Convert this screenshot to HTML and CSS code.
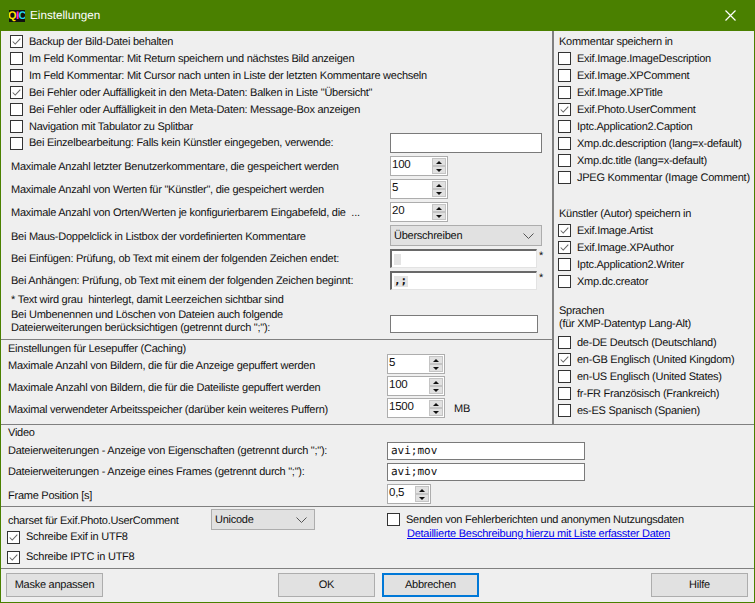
FILE: index.html
```html
<!DOCTYPE html>
<html lang="de">
<head>
  <meta charset="UTF-8">
  <title>Einstellungen</title>
  <link rel="stylesheet" href="styles.css">
</head>
<body>
  <div class="window">
    <div class="titlebar">
      <span class="app-icon"><b class="q">Q</b><b class="i">I</b><b class="c">C</b></span>
      <span class="title">Einstellungen</span>
      <svg class="close" width="11" height="11" viewBox="0 0 11 11"><path d="M0.5 0.5L10.5 10.5M10.5 0.5L0.5 10.5" stroke="#fff" stroke-width="1.2" fill="none"/></svg>
    </div>

    <div class="top">
      <div class="left">
        <div class="general">
          <label class="check-row"><span class="box"><svg viewBox="0 0 13 13"><path d="M2 6.5L5 9.5L11 3" stroke="#666" stroke-width="1.2" fill="none"/></svg></span>Backup der Bild-Datei behalten</label>
          <label class="check-row"><span class="box"></span>Im Feld Kommentar: Mit Return speichern und nächstes Bild anzeigen</label>
          <label class="check-row"><span class="box"></span>Im Feld Kommentar: Mit Cursor nach unten in Liste der letzten Kommentare wechseln</label>
          <label class="check-row"><span class="box"><svg viewBox="0 0 13 13"><path d="M2 6.5L5 9.5L11 3" stroke="#666" stroke-width="1.2" fill="none"/></svg></span>Bei Fehler oder Auffälligkeit in den Meta-Daten: Balken in Liste "Übersicht"</label>
          <label class="check-row"><span class="box"></span>Bei Fehler oder Auffälligkeit in den Meta-Daten: Message-Box anzeigen</label>
          <label class="check-row"><span class="box"></span>Navigation mit Tabulator zu Splitbar</label>
          <div class="check-row with-field">
            <label class="check-label"><span class="box"></span>Bei Einzelbearbeitung: Falls kein Künstler eingegeben, verwende:</label>
            <div class="field artist-field"></div>
          </div>

          <div class="form-row tall">
            <span class="form-label">Maximale Anzahl letzter Benutzerkommentare, die gespeichert werden</span>
            <div class="spinner"><span class="spin-value">100</span><span class="spin-btns"><i class="up"></i><i class="down"></i></span></div>
          </div>
          <div class="form-row tall">
            <span class="form-label">Maximale Anzahl von Werten für "Künstler", die gespeichert werden</span>
            <div class="spinner"><span class="spin-value">5</span><span class="spin-btns"><i class="up"></i><i class="down"></i></span></div>
          </div>
          <div class="form-row tall">
            <span class="form-label">Maximale Anzahl von Orten/Werten je konfigurierbarem Eingabefeld, die &nbsp;...</span>
            <div class="spinner"><span class="spin-value">20</span><span class="spin-btns"><i class="up"></i><i class="down"></i></span></div>
          </div>
          <div class="form-row tall select-row">
            <span class="form-label">Bei Maus-Doppelclick in Listbox der vordefinierten Kommentare</span>
            <div class="select wide"><span>Überschreiben</span><svg width="11" height="6" viewBox="0 0 11 6"><path d="M0.5 0.5L5.5 5.5L10.5 0.5" stroke="#555" fill="none"/></svg></div>
          </div>
          <div class="form-row sunken-row">
            <span class="form-label">Bei Einfügen: Prüfung, ob Text mit einem der folgenden Zeichen endet:</span>
            <div class="sunken"><span class="marked blank"></span></div><span class="star">*</span>
          </div>
          <div class="form-row sunken-row">
            <span class="form-label">Bei Anhängen: Prüfung, ob Text mit einem der folgenden Zeichen beginnt:</span>
            <div class="sunken"><span class="marked">,;</span></div><span class="star">*</span>
          </div>
          <div class="note">* Text wird grau &nbsp;hinterlegt, damit Leerzeichen sichtbar sind</div>
          <div class="form-row ext-row">
            <span class="form-label">Bei Umbenennen und Löschen von Dateien auch folgende<br>Dateierweiterungen berücksichtigen (getrennt durch ";"):</span>
            <div class="field ext"></div>
          </div>
        </div>

        <div class="caching">
          <div class="heading">Einstellungen für Lesepuffer (Caching)</div>
          <div class="form-row cache-row">
            <span class="form-label">Maximale Anzahl von Bildern, die für die Anzeige gepuffert werden</span>
            <div class="spinner"><span class="spin-value">5</span><span class="spin-btns"><i class="up"></i><i class="down"></i></span></div>
          </div>
          <div class="form-row cache-row">
            <span class="form-label">Maximale Anzahl von Bildern, die für die Dateiliste gepuffert werden</span>
            <div class="spinner"><span class="spin-value">100</span><span class="spin-btns"><i class="up"></i><i class="down"></i></span></div>
          </div>
          <div class="form-row cache-row">
            <span class="form-label">Maximal verwendeter Arbeitsspeicher (darüber kein weiteres Puffern)</span>
            <div class="spinner"><span class="spin-value">1500</span><span class="spin-btns"><i class="up"></i><i class="down"></i></span></div>
            <span class="unit">MB</span>
          </div>
        </div>
      </div>

      <div class="right">
        <div class="group comment-group">
          <div class="heading">Kommentar speichern in</div>
          <label class="check-row"><span class="box"></span>Exif.Image.ImageDescription</label>
          <label class="check-row"><span class="box"></span>Exif.Image.XPComment</label>
          <label class="check-row"><span class="box"></span>Exif.Image.XPTitle</label>
          <label class="check-row"><span class="box"><svg viewBox="0 0 13 13"><path d="M2 6.5L5 9.5L11 3" stroke="#666" stroke-width="1.2" fill="none"/></svg></span>Exif.Photo.UserComment</label>
          <label class="check-row"><span class="box"></span>Iptc.Application2.Caption</label>
          <label class="check-row"><span class="box"></span>Xmp.dc.description (lang=x-default)</label>
          <label class="check-row"><span class="box"></span>Xmp.dc.title (lang=x-default)</label>
          <label class="check-row"><span class="box"></span>JPEG Kommentar (Image Comment)</label>
        </div>
        <div class="group artist-group">
          <div class="heading">Künstler (Autor) speichern in</div>
          <label class="check-row"><span class="box"><svg viewBox="0 0 13 13"><path d="M2 6.5L5 9.5L11 3" stroke="#666" stroke-width="1.2" fill="none"/></svg></span>Exif.Image.Artist</label>
          <label class="check-row"><span class="box"><svg viewBox="0 0 13 13"><path d="M2 6.5L5 9.5L11 3" stroke="#666" stroke-width="1.2" fill="none"/></svg></span>Exif.Image.XPAuthor</label>
          <label class="check-row"><span class="box"></span>Iptc.Application2.Writer</label>
          <label class="check-row"><span class="box"></span>Xmp.dc.creator</label>
        </div>
        <div class="group lang-group">
          <div class="heading two-line">Sprachen<br>(für XMP-Datentyp Lang-Alt)</div>
          <label class="check-row"><span class="box"></span>de-DE Deutsch (Deutschland)</label>
          <label class="check-row"><span class="box"><svg viewBox="0 0 13 13"><path d="M2 6.5L5 9.5L11 3" stroke="#666" stroke-width="1.2" fill="none"/></svg></span>en-GB Englisch (United Kingdom)</label>
          <label class="check-row"><span class="box"></span>en-US Englisch (United States)</label>
          <label class="check-row"><span class="box"></span>fr-FR Französisch (Frankreich)</label>
          <label class="check-row"><span class="box"></span>es-ES Spanisch (Spanien)</label>
        </div>
      </div>
    </div>

    <div class="video">
      <div class="heading">Video</div>
      <div class="form-row video-row">
        <span class="form-label">Dateierweiterungen - Anzeige von Eigenschaften (getrennt durch ";"):</span>
        <div class="field mono">avi;mov</div>
      </div>
      <div class="form-row video-row">
        <span class="form-label">Dateierweiterungen - Anzeige eines Frames (getrennt durch ";"):</span>
        <div class="field mono">avi;mov</div>
      </div>
      <div class="form-row video-row last">
        <span class="form-label">Frame Position [s]</span>
        <div class="spinner small"><span class="spin-value">0,5</span><span class="spin-btns"><i class="up"></i><i class="down"></i></span></div>
      </div>
    </div>

    <div class="misc">
      <div class="misc-left">
        <div class="charset-row">
          <span class="charset-label">charset für Exif.Photo.UserComment</span>
          <div class="select charset"><span>Unicode</span><svg width="11" height="6" viewBox="0 0 11 6"><path d="M0.5 0.5L5.5 5.5L10.5 0.5" stroke="#555" fill="none"/></svg></div>
        </div>
        <label class="check-row utf"><span class="box"><svg viewBox="0 0 13 13"><path d="M2 6.5L5 9.5L11 3" stroke="#666" stroke-width="1.2" fill="none"/></svg></span>Schreibe Exif in UTF8</label>
        <label class="check-row utf"><span class="box"><svg viewBox="0 0 13 13"><path d="M2 6.5L5 9.5L11 3" stroke="#666" stroke-width="1.2" fill="none"/></svg></span>Schreibe IPTC in UTF8</label>
      </div>
      <div class="misc-right">
        <label class="check-row"><span class="box"></span>Senden von Fehlerberichten und anonymen Nutzungsdaten</label>
        <a class="link" href="#">Detaillierte Beschreibung hierzu mit Liste erfasster Daten</a>
      </div>
    </div>

    <div class="buttons">
      <button class="btn">Maske anpassen</button>
      <div class="btn-center">
        <button class="btn">OK</button>
        <button class="btn default">Abbrechen</button>
      </div>
      <button class="btn">Hilfe</button>
    </div>
  </div>
</body>
</html>
```

FILE: styles.css
```css
* {
  box-sizing: border-box;
}
body {
  margin: 0;
  width: 755px;
  height: 603px;
  overflow: hidden;
  font-family: "Liberation Sans", Arial, sans-serif;
  font-size: 11px;
  letter-spacing: -0.25px;
  text-rendering: geometricPrecision;
  color: #111;
  background-color: #efefef;
}
.window {
  width: 755px;
  height: 603px;
  display: flex;
  flex-direction: column;
  border: 1px solid #4a8000;
  border-top: none;
}
.titlebar {
  height: 31px;
  flex: none;
  margin: 0 -1px;
  display: flex;
  align-items: center;
  padding: 0 19px 0 9px;
  background-color: #4a8000;
  color: #fff;
  font-size: 11.7px;
  letter-spacing: 0;
}
.app-icon {
  width: 16px;
  height: 12px;
  display: flex;
  justify-content: center;
  background-color: #111;
  font-size: 11px;
  line-height: 12px;
  letter-spacing: -0.5px;
  overflow: hidden;
}
.app-icon .q { color: #ffe600; }
.app-icon .i { color: #ff2bd6; }
.app-icon .c { color: #22d8f0; }
.title {
  margin-left: 5px;
  flex: 1;
}

.top {
  height: 394px;
  flex: none;
  display: flex;
  border-bottom: 1px solid #808080;
}
.left {
  width: 553px;
  flex: none;
  display: flex;
  flex-direction: column;
  border-right: 2px solid #808080;
}
.general {
  height: 309px;
  flex: none;
  padding: 2px 0 0 9px;
  border-bottom: 1px solid #808080;
}
.caching {
  padding-left: 7px;
}
.right {
  flex: 1;
  padding: 2px 0 0 4px;
}

.check-row {
  height: 17px;
  display: flex;
  align-items: center;
  white-space: nowrap;
}
.check-label {
  display: flex;
  align-items: center;
  width: 380px;
  flex: none;
}
.box {
  width: 13px;
  height: 13px;
  flex: none;
  margin-right: 6px;
  border: 1px solid #333;
  background-color: #fff;
}
.box svg {
  display: block;
  width: 11px;
  height: 11px;
}
.with-field {
  height: 16px;
  margin-bottom: 5px;
}

.form-row {
  display: flex;
  align-items: center;
  white-space: nowrap;
}
.form-label {
  flex: none;
  width: 379px;
}
.general .form-row,
.note {
  padding-left: 1px;
}
.tall {
  height: 20px;
  margin-bottom: 3px;
}
.tall .form-label {
  padding-top: 2px;
}
.select-row {
  height: 21px;
}
.sunken-row {
  height: 19px;
  margin-bottom: 3px;
}
.note {
  height: 18px;
  line-height: 15px;
  margin-top: -3px;
  padding-top: 3px;
}
.ext-row {
  height: 27px;
  line-height: 13px;
}

.field {
  height: 18px;
  line-height: 15px;
  padding-left: 3px;
  background-color: #fff;
  border: 1px solid #7a7a7a;
}
.artist-field {
  width: 152px;
  height: 20px;
}
.wide {
  width: 152px;
}
.ext {
  width: 148px;
  align-self: flex-start;
  margin-top: 7px;
}
.mono {
  width: 198px;
  font-family: "DejaVu Sans Mono", monospace;
  font-size: 11px;
  letter-spacing: 0;
}
.spinner {
  width: 58px;
  height: 20px;
  display: flex;
  align-items: center;
  justify-content: space-between;
  padding: 0 1px 0 1px;
  background-color: #fff;
  border: 1px solid #adadad;
}
.spinner.small {
  width: 44px;
}
.spin-value {
  padding-bottom: 3px;
  font-size: 11.5px;
}
.spin-btns {
  width: 14px;
  height: 16px;
  display: flex;
  flex-direction: column;
  justify-content: space-between;
}
.spin-btns i {
  height: 8px;
  display: flex;
  align-items: center;
  justify-content: center;
  background-color: #e1e1e1;
  border: 1px solid #c4c4c4;
}
.spin-btns i::after {
  content: "";
  border-left: 3px solid transparent;
  border-right: 3px solid transparent;
}
.spin-btns .up::after {
  border-bottom: 3px solid #111;
}
.spin-btns .down::after {
  border-top: 3px solid #111;
}
.select {
  height: 21px;
  display: flex;
  align-items: center;
  justify-content: space-between;
  padding: 0 7px 0 3px;
  background-color: #e1e1e1;
  border: 1px solid #adadad;
}
.sunken {
  width: 147px;
  height: 19px;
  padding: 3px 0 0 2px;
  background-color: #fff;
  border-top: 2px solid #696969;
  border-left: 2px solid #696969;
  border-right: 1px solid #e3e3e3;
  border-bottom: 1px solid #e3e3e3;
}
.marked {
  display: block;
  width: 14px;
  height: 11px;
  line-height: 10px;
  font-family: "DejaVu Sans Mono", monospace;
  font-size: 11px;
  font-weight: bold;
  letter-spacing: 0;
  background-color: #e4e4e4;
  white-space: nowrap;
}
.marked.blank {
  width: 7px;
}
.star {
  margin: -6px 0 0 2px;
}
.unit {
  margin-left: 9px;
  padding-top: 2px;
}

.heading {
  height: 17px;
  line-height: 18px;
  padding-left: 1px;
}
.two-line {
  height: 35px;
  line-height: 13px;
  padding-top: 6px;
}
.caching .heading {
  height: 14px;
  line-height: 18px;
  padding-left: 0;
}
.cache-row {
  height: 20px;
  margin-bottom: 2px;
}
.cache-row .form-label {
  padding-top: 4px;
}
.comment-group {
  height: 172px;
}
.artist-group {
  height: 94px;
}

.video {
  height: 82px;
  flex: none;
  padding-left: 7px;
  border-bottom: 1px solid #808080;
}
.video .heading {
  height: 15px;
  line-height: 17px;
  margin-bottom: 2px;
  padding-left: 0;
}
.video-row {
  height: 18px;
  margin-bottom: 3px;
}
.video-row.last {
  height: 20px;
  margin-bottom: 0;
}
.video-row.last .form-label {
  padding-top: 4px;
}

.misc {
  height: 62px;
  flex: none;
  display: flex;
  padding-left: 6px;
  border-bottom: 1px solid #808080;
}
.misc-left {
  width: 380px;
  flex: none;
  padding-top: 2px;
}
.charset-row {
  height: 21px;
  display: flex;
  align-items: center;
  padding-left: 1px;
}
.charset-label {
  width: 203px;
  flex: none;
  padding-top: 2px;
}
.charset {
  width: 104px;
}
.utf {
  height: 14px;
  margin-bottom: 6px;
}
.misc-right {
  padding-top: 4px;
}
.link {
  display: block;
  margin-left: 20px;
  color: #0000ee;
}

.buttons {
  flex: 1;
  display: flex;
  align-items: flex-start;
  justify-content: space-between;
  padding: 4px 6px 0 5px;
}
.btn-center {
  display: flex;
  gap: 7px;
  margin-left: 3px;
}
.btn {
  width: 97px;
  height: 24px;
  padding: 0;
  font-family: inherit;
  font-size: 11px;
  letter-spacing: -0.25px;
  text-rendering: geometricPrecision;
  color: #111;
  background-color: #e1e1e1;
  border: 1px solid #adadad;
}
.btn.default {
  border: 2px solid #0078d7;
}
```
